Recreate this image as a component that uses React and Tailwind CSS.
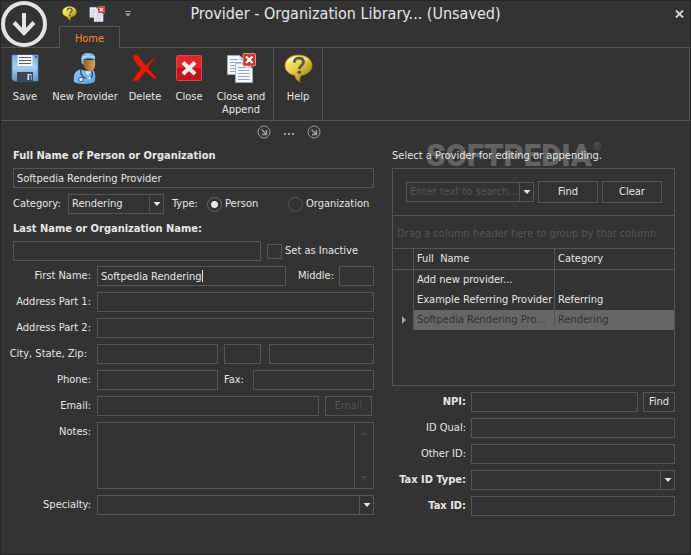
import React from 'react';

const field =
  'block h-5 w-full min-w-0 rounded-none border border-[#555] bg-transparent px-[3px] text-[11px] text-[#e6e6e6] outline-none';
const button =
  'flex items-center justify-center border border-[#555] text-[11px] text-[#e6e6e6]';

function HelpIcon({ size }) {
  return (
    <svg width={size} height={size} viewBox="0 0 30 30" aria-hidden="true">
      <defs>
        <linearGradient id="gold" x1="0" y1="0" x2="1" y2="1">
          <stop offset="0" stopColor="#fdf3a0" />
          <stop offset="0.45" stopColor="#e8cf45" />
          <stop offset="1" stopColor="#8d6a08" />
        </linearGradient>
      </defs>
      <path
        d="M15 1C7 1 1 5.500 1 12c0 5 4 9 10 10 .6 2.500 2 5.500 5.500 7-.8-2.500-.4-4.500 1.500-7 7-1 11-5 11-10C29 5.500 23 1 15 1z"
        fill="url(#gold)"
        stroke="#a88318"
        strokeWidth="0.8"
      />
      <path d="M4 9C6 4 11 2.500 15 2.500c5 0 8 1.500 10 4C19 4.500 9 5 4 9z" fill="#fffbd0" opacity="0.7" />
      <path
        d="M10.500 9c.2-3.200 2.200-4.800 5-4.800s4.700 1.600 4.700 4.100c0 3.400-4.200 3.700-4.200 7.200"
        fill="none"
        stroke="#55554d"
        strokeWidth="2.800"
      />
      <circle cx="15.800" cy="19" r="1.900" fill="#55554d" />
    </svg>
  );
}

function Sheet({ x, y }) {
  return (
    <g transform={`translate(${x} ${y})`}>
      <path d="M0 0h12l5 5v14H0z" fill="#f4f8fc" stroke="#9fb4cc" strokeWidth="0.8" />
      <path d="M12 0v5h5z" fill="#c5d3e2" />
      <path d="M2.500 4h8M2.500 7h11.500M2.500 10h11.500M2.500 13h11.500M2.500 16h11.500" stroke="#9aa9ba" strokeWidth="1" />
    </g>
  );
}

function AppendIcon({ size }) {
  return (
    <svg width={size} height={size} viewBox="0 0 30 30" aria-hidden="true">
      <Sheet x={1.500} y={2.500} />
      <Sheet x={9.500} y={10.500} />
      <rect x="17" y="0.500" width="12.500" height="12.500" rx="1" fill="#c9362c" stroke="#f0a59c" strokeWidth="0.8" />
      <path d="M20 3.500l6.500 6.500M26.500 3.500L20 10" stroke="#fff" strokeWidth="2.200" />
    </svg>
  );
}

function SaveIcon() {
  return (
    <svg width="28" height="28" viewBox="0 0 28 28" aria-hidden="true">
      <defs>
        <linearGradient id="disk" x1="0" y1="0" x2="0" y2="1">
          <stop offset="0" stopColor="#7fb0df" />
          <stop offset="0.5" stopColor="#a9cdf0" />
          <stop offset="1" stopColor="#5f95cf" />
        </linearGradient>
      </defs>
      <path d="M1 1h26v26H3l-2-2z" fill="url(#disk)" stroke="#5584b8" strokeWidth="0.8" />
      <rect x="6.500" y="1" width="15" height="11" fill="#f3f6fa" />
      <path d="M8 3.500h12M8 6.500h12M8 9.500h12" stroke="#555d68" strokeWidth="1.200" />
      <rect x="6" y="18" width="16" height="9" fill="#3e4754" />
      <rect x="16.500" y="20" width="4" height="6" fill="#dbe8f5" />
      <rect x="18" y="21" width="2" height="5" fill="#4a6488" />
      <path d="M24 2h2v2h-2z" fill="#3c5f88" />
    </svg>
  );
}

function DoctorIcon() {
  return (
    <svg width="26" height="32" viewBox="0 0 26 32" aria-hidden="true">
      <defs>
        <linearGradient id="face" x1="0" y1="0" x2="1" y2="0">
          <stop offset="0" stopColor="#8a5a20" />
          <stop offset="1" stopColor="#d9a45c" />
        </linearGradient>
        <linearGradient id="coat" x1="0" y1="0" x2="1" y2="1">
          <stop offset="0" stopColor="#8fc6f3" />
          <stop offset="1" stopColor="#5ba3e0" />
        </linearGradient>
      </defs>
      <path d="M2 30C1 23 3 19 8 17.500l7 1.500 6-1c2.500 2 3 6 1.500 12-5 2.500-16 2.500-20.500 0z" fill="url(#coat)" />
      <path d="M10.500 8H23c1 6-1 11-5 12-4-1-7.500-6-7.500-12z" fill="url(#face)" />
      <path d="M9.500 10C8.500 3 11 1 16.500 1s7.500 3 6.500 7c-4-2-9-2-11.500 0v5c-1.500-1-2-2-2-3z" fill="#7db9ea" />
      <path d="M10 6.500C13 3.500 18 3.500 22.500 5.500" stroke="#c4e2fa" strokeWidth="1.200" fill="none" />
      <path d="M8.500 18c0 5 2 7 5 8.500M19.500 19c2 3 1 6-1 7" fill="none" stroke="#23405f" strokeWidth="1.200" />
      <path d="M13 19l3 5 3-4.500z" fill="#d3e9fb" />
      <circle cx="9" cy="27.500" r="2.200" fill="#dce8f2" stroke="#2b4765" strokeWidth="0.8" />
      <circle cx="17.500" cy="26" r="1.200" fill="#dce8f2" />
    </svg>
  );
}

function DeleteIcon() {
  return (
    <svg width="26" height="28" viewBox="0 0 26 28" aria-hidden="true">
      <path
        d="M1 3c0-2.500 4-3 6-.5 2 3.500 4.500 6.500 7 9C17 8 20.500 5 25 3c-4 3.500-7 7-9 11 2.500 3 5.500 6.500 8.500 9.500l-2 1.500c-4-3-6.500-5-9-7.500-2.500 3-5 6-6.500 8.500-1.500 1.500-6 1.500-6-.5C3 22 6 18 9 14.500 6 11 2 8 1 3z"
        fill="#e01e0c"
        stroke="#a80f04"
        strokeWidth="0.7"
      />
    </svg>
  );
}

function CloseIcon() {
  return (
    <svg width="26" height="28" viewBox="0 0 26 28" aria-hidden="true">
      <rect x="0.500" y="1.500" width="25" height="25" rx="1" fill="#e5232a" stroke="#d8494c" />
      <path d="M1 14h24v12H1z" fill="#c2141b" />
      <path d="M7 8.500l12 11.500M19 8.500L7 20" stroke="#eff2ea" strokeWidth="4" />
    </svg>
  );
}

function Arrow({ up = false, dim = false }) {
  return (
    <svg width="8" height="4" viewBox="0 0 8 4" aria-hidden="true" className={dim ? 'text-[#484848]' : 'text-[#e6e6e6]'}>
      <path d={up ? 'M1 4h6L4 1z' : 'M0.500 0h7L4 4z'} fill="currentColor" />
    </svg>
  );
}

function Select({ id, className = '', children }) {
  return (
    <div className={`relative min-w-0 ${className}`}>
      <select id={id} className={`${field} appearance-none pr-4`}>
        {children}
      </select>
      <span className="pointer-events-none absolute inset-y-px right-px flex w-3.5 items-center justify-center border-l border-[#555]">
        <Arrow />
      </span>
    </div>
  );
}

function RibbonButton({ icon, label, className }) {
  return (
    <button type="button" className={`flex flex-col items-center pt-1 text-[11px] leading-[13px] ${className}`}>
      <span className="mb-[6px] flex h-8 items-center">{icon}</span>
      {label}
    </button>
  );
}

function CircleArrow({ label }) {
  return (
    <button type="button" aria-label={label}>
      <svg width="14" height="14" viewBox="0 0 14 14" fill="none" stroke="#a0a0a0" aria-hidden="true">
        <circle cx="7" cy="7" r="6" />
        <path d="M4.500 4.500l4.500 4.500M9.500 5v4.500H5" strokeWidth="1.400" />
      </svg>
    </button>
  );
}

function Row({ label, id, bold = false, top = false, right = false, shift = false, children }) {
  return (
    <div className={`flex ${right ? 'gap-[5px]' : 'gap-[6px]'} ${top ? 'items-start' : 'items-center'}`}>
      <label
        htmlFor={id}
        className={`flex h-5 shrink-0 items-center justify-end whitespace-nowrap ${right ? 'w-[74px]' : 'w-[78px]'} ${bold ? 'font-bold' : ''} ${shift ? 'pr-1' : ''}`}
      >
        {label}
      </label>
      <div className="flex min-w-0 flex-1">{children}</div>
    </div>
  );
}

function Header() {
  return (
    <header className="relative">
      <div className="grid h-[25px] grid-cols-[1fr_auto_1fr] items-center">
        <div className="flex items-center pl-[61px]">
          <button type="button" aria-label="Help"><HelpIcon size={15} /></button>
          <button type="button" aria-label="Close and Append" className="ml-3"><AppendIcon size={16} /></button>
          <button type="button" aria-label="Customize toolbar" className="ml-5">
            <svg width="6" height="6" viewBox="0 0 6 6" fill="#a0a0a0" aria-hidden="true">
              <path d="M0 0h6v1H0zM0 2.500h6L3 5.500z" />
            </svg>
          </button>
        </div>
        <h1 className="text-base">Provider - Organization Library... (Unsaved)</h1>
        <button type="button" aria-label="Close window" className="mr-[6px] justify-self-end">
          <svg width="9" height="8" viewBox="0 0 9 8" fill="none" stroke="#d6d6d6" strokeWidth="1.800" aria-hidden="true">
            <path d="M1 0.500l7 7M8 0.500l-7 7" />
          </svg>
        </button>
      </div>
      <div className="flex h-[21px] pl-[58px]">
        <button type="button" className="relative z-10 -mb-px flex w-[61px] items-center justify-center border border-b-0 border-[#555] bg-[#333] pt-1 text-[11px] text-[#ff8c1a]">
          Home
        </button>
      </div>
      <button type="button" aria-label="Application menu" className="absolute top-0 left-0 z-20">
        <svg width="46" height="46" viewBox="0 0 46 46" fill="none" stroke="#e4e4e4" aria-hidden="true">
          <circle cx="23" cy="23" r="21" fill="#333" strokeWidth="4" />
          <path d="M23 12v21" strokeWidth="4" />
          <path d="M13 21.500l10 10.500 10-10.500" strokeWidth="4" />
        </svg>
      </button>
      <nav className="flex h-[74px] border border-l-0 border-[#555]">
        <RibbonButton icon={<SaveIcon />} label="Save" className="w-12" />
        <RibbonButton icon={<DoctorIcon />} label="New Provider" className="w-[72px] whitespace-nowrap" />
        <RibbonButton icon={<DeleteIcon />} label="Delete" className="w-12" />
        <RibbonButton icon={<CloseIcon />} label="Close" className="w-10" />
        <RibbonButton icon={<AppendIcon size={30} />} label="Close and Append" className="w-16" />
        <RibbonButton icon={<HelpIcon size={29} />} label="Help" className="w-[50px] border-x border-[#555]" />
      </nav>
    </header>
  );
}

function PersonForm() {
  return (
    <form className="min-w-0">
      <label htmlFor="full" className="flex h-6 items-center font-bold">Full Name of Person or Organization</label>
      <input id="full" defaultValue="Softpedia Rendering Provider" className={field} />
      <div className="mt-[6px] flex h-5 items-center">
        <label htmlFor="category" className="w-[55px] shrink-0">Category:</label>
        <Select id="category" className="w-24"><option>Rendering</option></Select>
        <span className="ml-2 w-[29px] shrink-0">Type:</span>
        <label className="ml-[6px] flex w-[81px] shrink-0 items-center gap-[3px]">
          <input type="radio" name="type" defaultChecked className="size-[15px] appearance-none rounded-full border border-[#666] checked:bg-[radial-gradient(circle,#e6e6e6_0_3px,#333_4px)]" />
          Person
        </label>
        <label className="flex items-center gap-[3px]">
          <input type="radio" name="type" className="size-[15px] appearance-none rounded-full border border-[#555]" />
          Organization
        </label>
      </div>
      <label htmlFor="last" className="mt-[3px] flex h-6 items-center font-bold">Last Name or Organization Name:</label>
      <div className="flex items-center">
        <input id="last" className={`${field} flex-1`} />
        <label className="ml-[6px] flex w-[107px] items-center gap-[3px]">
          <input type="checkbox" className="size-[15px] appearance-none border border-[#555]" />
          Set as Inactive
        </label>
      </div>
      <div className="mt-[5px] flex flex-col gap-[6px]">
        <Row label="First Name:" id="first">
          <div className="relative min-w-0 flex-1">
            <input id="first" defaultValue="Softpedia Rendering" className={field} />
            <span className="absolute inset-y-1 left-[105px] w-px bg-[#e6e6e6]" />
          </div>
          <label htmlFor="middle" className="ml-3 flex w-[41px] shrink-0 items-center">Middle:</label>
          <input id="middle" className={`${field} max-w-[35px]`} />
        </Row>
        <Row label="Address Part 1:" id="a1"><input id="a1" className={field} /></Row>
        <Row label="Address Part 2:" id="a2"><input id="a2" className={field} /></Row>
        <Row label="City, State, Zip:" id="city" shift>
          <div className="grid w-full grid-cols-[121fr_43fr_113fr]">
            <div><input id="city" aria-label="City" className={field} /></div>
            <div className="pl-[6px]"><input aria-label="State" className={field} /></div>
            <div className="pl-2"><input aria-label="Zip" className={field} /></div>
          </div>
        </Row>
        <Row label="Phone:" id="phone">
          <input id="phone" className={`${field} flex-1`} />
          <label htmlFor="fax" className="flex w-[35px] shrink-0 items-center pl-[6px]">Fax:</label>
          <input id="fax" className={`${field} flex-1`} />
        </Row>
        <Row label="Email:" id="email">
          <input id="email" className={`${field} flex-1`} />
          <button type="button" disabled className="mr-[2px] ml-[6px] h-5 w-[47px] border border-[#555] text-[#555]">Email</button>
        </Row>
        <Row label="Notes:" id="notes" top>
          <div className="flex h-[67px] w-full border border-[#555] py-px">
            <textarea id="notes" className="min-w-0 flex-1 resize-none bg-transparent px-1 outline-none" />
            <span className="mr-px flex w-[18px] flex-col items-center justify-between border-l border-[#555] py-[7px]">
              <Arrow up dim />
              <Arrow dim />
            </span>
          </div>
        </Row>
        <Row label="Specialty:" id="specialty">
          <Select id="specialty" className="flex-1"><option></option></Select>
        </Row>
      </div>
    </form>
  );
}

function ProviderPanel() {
  const cell = 'h-5 truncate border-l border-[#555] py-0 pr-0 pl-[3px] text-left font-normal';
  return (
    <section className="min-w-0">
      <div className="relative h-6">
        <div className="absolute -top-1 left-[34px] flex items-start text-[#626262]" aria-hidden="true">
          <span className="font-[Roboto] text-[31px] leading-8 font-black">SOFTPEDIA</span>
          <span className="leading-[14px]">®</span>
        </div>
        <p className="relative flex h-6 items-center">Select a Provider for editing or appending.</p>
      </div>
      <div className="relative h-[218px] border border-[#555] bg-[#333]">
        <div className="flex h-[47px] items-center border-b border-[#555] pr-3 pl-[13px]">
          <div className="flex h-5 min-w-0 flex-1 border border-[#555]">
            <input aria-label="Search" placeholder="Enter text to search..." className="min-w-0 flex-1 bg-transparent pl-[3px] text-ellipsis outline-none placeholder:text-[#555]" />
            <button type="button" aria-label="Search history" className="flex w-3.5 items-center justify-center border-l border-[#555]"><Arrow /></button>
          </div>
          <button type="button" className={`${button} ml-1 h-[22px] w-[60px]`}>Find</button>
          <button type="button" className={`${button} ml-1 h-[22px] w-[60px]`}>Clear</button>
        </div>
        <p className="flex h-8 items-center pt-1 pl-1 text-[#555]">Drag a column header here to group by that column</p>
        <table className="w-full table-fixed border-separate border-spacing-0">
          <colgroup><col className="w-[20px]" /><col className="w-[141px]" /><col /></colgroup>
          <thead>
            <tr>
              <th className="h-[22px] border-y border-[#555] p-0" aria-label="Row marker" />
              <th className="h-[22px] border-y border-l border-[#555] px-[3px] py-0 text-left font-normal whitespace-pre">Full  Name</th>
              <th className="h-[22px] border-y border-l border-[#555] px-[3px] py-0 text-left font-normal">Category</th>
            </tr>
          </thead>
          <tbody>
            <tr><td className="h-5 p-0" /><td className={cell}>Add new provider...</td><td className={cell} /></tr>
            <tr><td className="h-5 p-0" /><td className={cell}>Example Referring Provider</td><td className={cell}>Referring</td></tr>
            <tr className="text-[#333]">
              <td className="h-5 p-0">
                <svg width="4" height="8" viewBox="0 0 4 8" className="ml-[9px]" aria-hidden="true"><path d="M0 0l4 4-4 4z" fill="#a0a0a0" /></svg>
              </td>
              <td className={`${cell} bg-[#666]`}>Softpedia Rendering Pro...</td>
              <td className={`${cell} bg-[#666]`}>Rendering</td>
            </tr>
          </tbody>
        </table>
      </div>
      <div className="mt-[6px] flex flex-col gap-[6px]">
        <Row right bold label="NPI:" id="npi">
          <input id="npi" className={`${field} flex-1`} />
          <button type="button" className={`${button} ml-[5px] h-5 w-8 shrink-0`}>Find</button>
        </Row>
        <Row right label="ID Qual:" id="qual"><input id="qual" className={field} /></Row>
        <Row right label="Other ID:" id="other"><input id="other" className={field} /></Row>
        <Row right bold label="Tax ID Type:" id="taxtype"><Select id="taxtype" className="flex-1"><option></option></Select></Row>
        <Row right bold label="Tax ID:" id="tax"><input id="tax" className={field} /></Row>
      </div>
    </section>
  );
}

export default function App() {
  return (
    <main className="min-h-screen border border-[#262626] bg-[#333] font-['DejaVu_Sans_Condensed','Noto_Sans',sans-serif] text-[11px] text-[#e6e6e6]">
      <Header />
      <div className="flex h-[23px] items-center gap-[10px] pb-[2px] pl-64">
        <CircleArrow label="Expand left group" />
        <button type="button" aria-label="More" className="flex w-4 items-end justify-center gap-[2px] pt-1">
          <span className="size-[2px] bg-[#a0a0a0]" />
          <span className="size-[2px] bg-[#a0a0a0]" />
          <span className="size-[2px] bg-[#a0a0a0]" />
        </button>
        <CircleArrow label="Expand right group" />
      </div>
      <div className="grid grid-cols-[361fr_283fr] gap-[18px] pr-[15px] pl-3">
        <PersonForm />
        <ProviderPanel />
      </div>
    </main>
  );
}
